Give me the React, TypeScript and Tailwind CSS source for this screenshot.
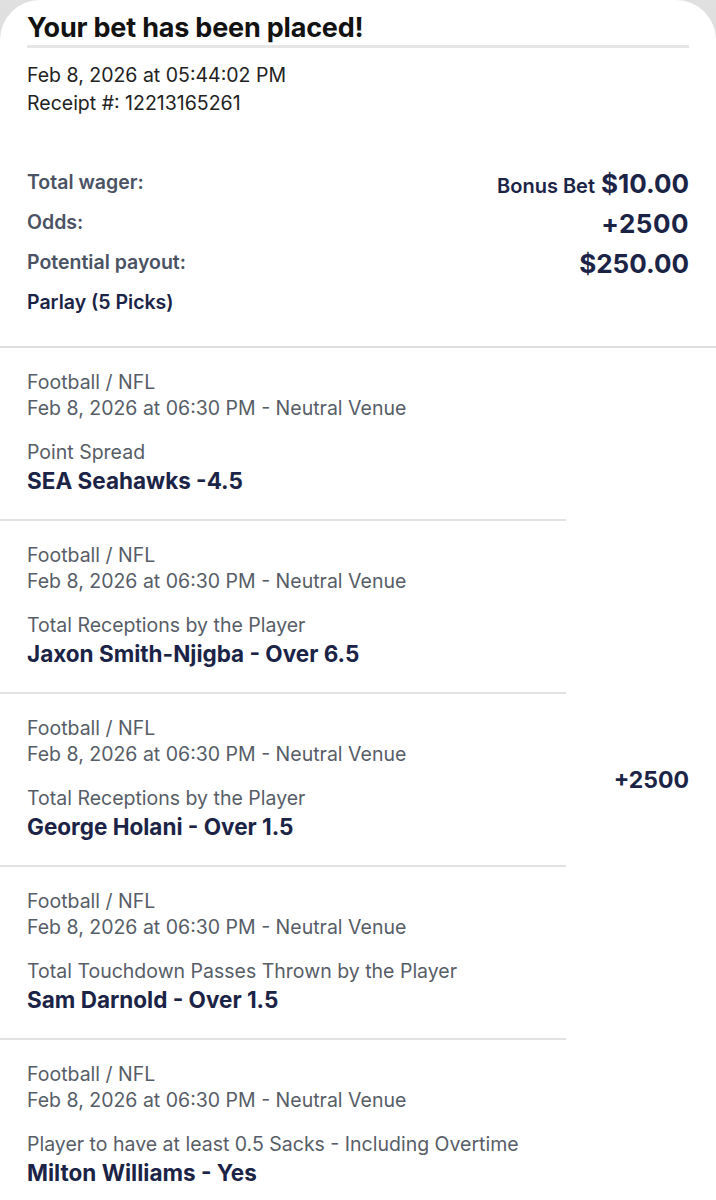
import React from "react";

const legs = [
  { market: "Point Spread", pick: "SEA Seahawks -4.5" },
  { market: "Total Receptions by the Player", pick: "Jaxon Smith-Njigba - Over 6.5" },
  { market: "Total Receptions by the Player", pick: "George Holani - Over 1.5" },
  { market: "Total Touchdown Passes Thrown by the Player", pick: "Sam Darnold - Over 1.5" },
  { market: "Player to have at least 0.5 Sacks - Including Overtime", pick: "Milton Williams - Yes" },
];

function SummaryRow({ label, children }: { label: string; children: React.ReactNode }) {
  return (
    <div className="flex h-[40px] items-center justify-between">
      <span className="text-[19.5px] font-semibold text-[#4a5263]">{label}</span>
      <span className="flex items-baseline gap-[6px] text-[#1b2446]">{children}</span>
    </div>
  );
}

function Leg({ market, pick }: { market: string; pick: string }) {
  return (
    <div className="border-b-2 border-[#e2e2e2] pb-[24px] pl-[27px] pt-[21px]">
      <p className="text-[19.5px] leading-[26px] text-[#575d67]">Football / NFL</p>
      <p className="text-[19.5px] leading-[26px] text-[#575d67]">
        Feb 8, 2026 at 06:30 PM - Neutral Venue
      </p>
      <p className="mt-[18px] text-[19.5px] leading-[26px] text-[#575d67]">{market}</p>
      <p className="mt-[2px] text-[22.5px] font-bold leading-[28px] text-[#1b2446]">{pick}</p>
    </div>
  );
}

export default function App() {
  return (
    <div
      className="min-h-[1200px] bg-gradient-to-b from-[#e0e0e0] to-[#bdbdbd]"
      style={{ fontFamily: "Inter, 'Noto Sans', sans-serif" }}
    >
      <div className="min-h-[1200px] overflow-hidden rounded-t-[40px] bg-white">
        {/* header */}
        <div className="px-[27px] pt-[11px]">
          <h1 className="text-[27px] font-bold leading-[33px] tracking-[-0.2px] text-[#121212]">
            Your bet has been placed!
          </h1>
          <div className="mt-[1px] h-[3px] bg-[#e6e6e6]" />
          <div className="mt-[13px] text-[19.5px] leading-[28px] text-[#222222]">
            <p>Feb 8, 2026 at 05:44:02 PM</p>
            <p>Receipt #: 12213165261</p>
          </div>

          <div className="mt-[46px]">
            <SummaryRow label="Total wager:">
              <span className="text-[20px] font-semibold">Bonus Bet</span>
              <span className="text-[26px] font-bold">$10.00</span>
            </SummaryRow>
            <SummaryRow label="Odds:">
              <span className="text-[26px] font-bold tracking-[0.5px]">+2500</span>
            </SummaryRow>
            <SummaryRow label="Potential payout:">
              <span className="text-[26px] font-bold">$250.00</span>
            </SummaryRow>
            <div className="flex h-[40px] items-center">
              <span className="text-[19.5px] font-semibold text-[#1b2446]">Parlay (5 Picks)</span>
            </div>
          </div>
        </div>

        <div className="mt-[23px] h-[2px] bg-[#dedede]" />

        {/* legs */}
        <div className="flex">
          <div className="w-[566px] shrink-0">
            {legs.map((l, i) => (
              <Leg key={i} market={l.market} pick={l.pick} />
            ))}
          </div>
          <div className="flex flex-1 items-center justify-end pr-[27px]">
            <span className="text-[23px] font-bold text-[#1b2446]">+2500</span>
          </div>
        </div>
      </div>
    </div>
  );
}
